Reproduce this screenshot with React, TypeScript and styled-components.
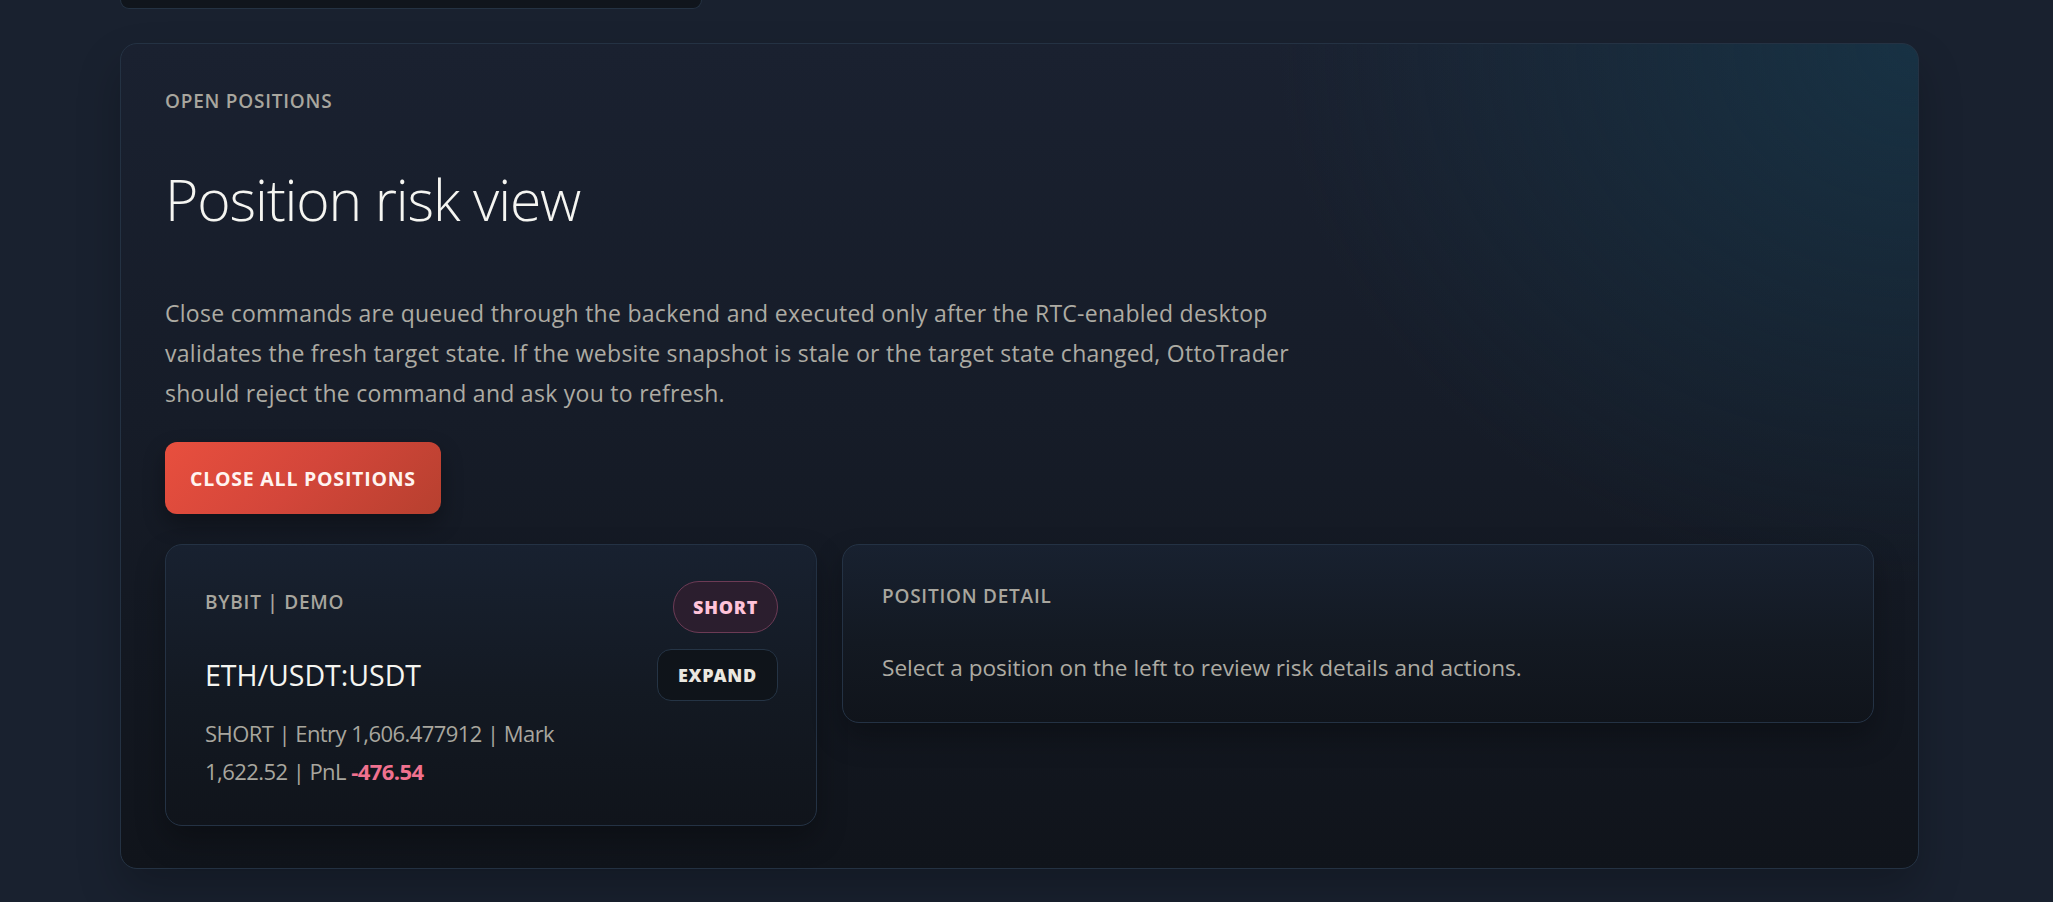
import React from "react"
import styled, { createGlobalStyle } from "styled-components"

const GlobalStyle = createGlobalStyle`
    html, body {
        margin: 0;
        padding: 0;
        background: #19212f;
    }
    body {
        font-family: "Open Sans", "Noto Sans", "Liberation Sans", sans-serif;
        color: #f4f4f0;
        -webkit-font-smoothing: antialiased;
    }
    * {
        box-sizing: border-box;
    }
`

const Page = styled.div`
    min-height: 902px;
    padding: 0 0 34px 120px;
    display: flex;
    flex-direction: column;
    gap: 34px;
`

const PrevSection = styled.div`
    width: 582px;
    height: 9px;
    background: #10151c;
    border: 1px solid #243242;
    border-top: none;
    border-radius: 0 0 16px 16px;
`

const Panel = styled.section`
    width: 1799px;
    padding: 44px 44px 42px;
    border: 1px solid #243243;
    border-radius: 17px;
    background:
        radial-gradient(ellipse 640px 540px at 100% 0%, rgba(22, 60, 80, 0.62), rgba(22, 60, 80, 0) 100%),
        linear-gradient(180deg, #1a2130 0%, #161c28 45%, #10141b 100%);
    box-shadow: 0 22px 44px rgba(0, 0, 0, 0.22);
    display: flex;
    flex-direction: column;
    align-items: flex-start;
`

const Eyebrow = styled.div`
    font-size: 19px;
    line-height: 26.6px;
    font-weight: 600;
    letter-spacing: 0.04em;
    text-transform: uppercase;
    color: #a8a69e;
`

const Title = styled.h1`
    margin: 53px 0 0;
    font-size: 57px;
    line-height: 62.7px;
    font-weight: 300;
    letter-spacing: -0.02em;
    color: #f5f5f1;
`

const Lead = styled.p`
    margin: 63px 0 0;
    max-width: 1160px;
    font-size: 23px;
    line-height: 40px;
    letter-spacing: 0.012em;
    color: #adaba3;
`

const DangerButton = styled.button`
    margin-top: 29px;
    height: 72px;
    padding: 0 25px;
    display: inline-flex;
    align-items: center;
    border: none;
    border-radius: 12px;
    background: linear-gradient(135deg, #e84f3e 0%, #d3463a 50%, #b7402f 100%);
    box-shadow: 0 10px 22px rgba(0, 0, 0, 0.32);
    font-family: inherit;
    font-size: 19.5px;
    font-weight: 700;
    letter-spacing: 0.04em;
    color: #fff4f0;
    text-transform: uppercase;
    cursor: pointer;
`

const Columns = styled.div`
    margin-top: 30px;
    width: 100%;
    display: grid;
    grid-template-columns: 652px minmax(0, 1fr);
    gap: 25px;
    align-items: start;
`

const Card = styled.div<{ $pad: string }>`
    padding: ${(p) => p.$pad};
    border: 1px solid #243244;
    border-radius: 17px;
    background: linear-gradient(180deg, #182130 0%, #131922 55%, #10141b 100%);
    box-shadow: 0 14px 30px rgba(0, 0, 0, 0.28);
`

const Row = styled.div<{ $align: string; $mt?: number }>`
    display: flex;
    justify-content: space-between;
    align-items: ${(p) => p.$align};
    gap: 24px;
    margin-top: ${(p) => p.$mt ?? 0}px;
`

const CardLabel = styled(Eyebrow)<{ $mt?: number }>`
    margin-top: ${(p) => p.$mt ?? 0}px;
`

const Symbol = styled.div`
    font-size: 28.5px;
    line-height: 34px;
    font-weight: 400;
    color: #f5f5f1;
`

const Pill = styled.span<{ $tone: "short" | "plain" }>`
    height: 52px;
    display: inline-flex;
    align-items: center;
    justify-content: center;
    padding: 0 ${(p) => (p.$tone === "short" ? 19 : 20)}px;
    border-radius: ${(p) => (p.$tone === "short" ? "999px" : "14px")};
    border: 1px solid ${(p) => (p.$tone === "short" ? "#6c3b55" : "#253445")};
    background: ${(p) => (p.$tone === "short" ? "#2b1e2e" : "#0f141a")};
    color: ${(p) => (p.$tone === "short" ? "#ffc3d9" : "#ebe8e0")};
    font-family: "Noto Sans", "Open Sans", sans-serif;
    font-size: 18px;
    font-weight: 900;
    letter-spacing: 0.04em;
    text-transform: uppercase;
`

const Meta = styled.div`
    margin-top: 14px;
    max-width: 420px;
    font-size: 22px;
    line-height: 37.6px;
    letter-spacing: -0.025em;
    color: #a8a69e;
`

const Loss = styled.strong`
    font-weight: 700;
    color: #f0718f;
`

const DetailText = styled.p`
    margin: 40px 0 0;
    font-size: 22.6px;
    line-height: 35px;
    color: #adaba3;
`

const position = {
    venue: "BYBIT | DEMO",
    side: "SHORT",
    symbol: "ETH/USDT:USDT",
    entry: "1,606.477912",
    mark: "1,622.52",
    pnl: "-476.54",
}

export default function App() {
    return (
        <>
            <GlobalStyle />
            <Page>
                <PrevSection />
                <Panel>
                    <Eyebrow>Open positions</Eyebrow>
                    <Title>Position risk view</Title>
                    <Lead>
                        Close commands are queued through the backend and executed only after the RTC-enabled
                        desktop validates the fresh target state. If the website snapshot is stale or the target
                        state changed, OttoTrader should reject the command and ask you to refresh.
                    </Lead>
                    <DangerButton>Close all positions</DangerButton>
                    <Columns>
                        <Card $pad="36px 38px 35px 39px">
                            <Row $align="flex-start">
                                <CardLabel $mt={8}>{position.venue}</CardLabel>
                                <Pill $tone="short">{position.side}</Pill>
                            </Row>
                            <Row $align="center" $mt={16}>
                                <Symbol>{position.symbol}</Symbol>
                                <Pill as="button" $tone="plain">
                                    Expand
                                </Pill>
                            </Row>
                            <Meta>
                                {position.side} | Entry {position.entry} | Mark {position.mark} | PnL{" "}
                                <Loss>{position.pnl}</Loss>
                            </Meta>
                        </Card>
                        <Card $pad="38px 39px 37px 39px">
                            <Eyebrow>Position detail</Eyebrow>
                            <DetailText>Select a position on the left to review risk details and actions.</DetailText>
                        </Card>
                    </Columns>
                </Panel>
            </Page>
        </>
    )
}
